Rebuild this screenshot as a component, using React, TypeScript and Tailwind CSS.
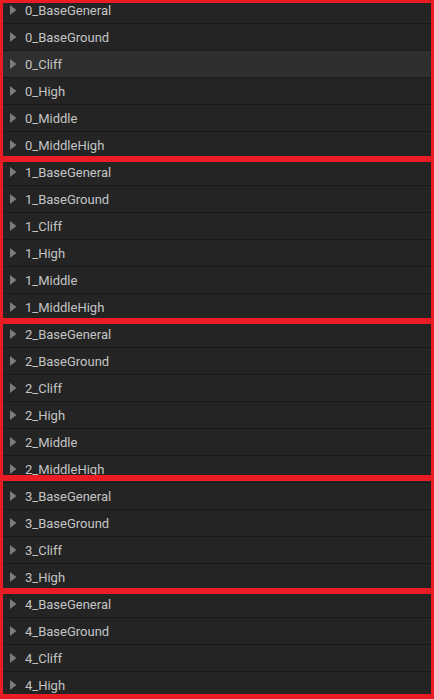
const groups = [
  {
    rows: ['0_BaseGeneral', '0_BaseGround', '0_Cliff', '0_High', '0_Middle', '0_MiddleHigh'],
    frame: 'top-[3px] bottom-0 border-[3px]',
  },
  {
    rows: ['1_BaseGeneral', '1_BaseGround', '1_Cliff', '1_High', '1_Middle', '1_MiddleHigh'],
    frame: 'top-0 bottom-0 border-[3px]',
  },
  {
    rows: ['2_BaseGeneral', '2_BaseGround', '2_Cliff', '2_High', '2_Middle', '2_MiddleHigh'],
    frame: 'top-0 bottom-[5px] border-[3px]',
  },
  {
    rows: ['3_BaseGeneral', '3_BaseGround', '3_Cliff', '3_High'],
    frame: '-top-[5px] bottom-0 border-[3px]',
  },
  {
    rows: ['4_BaseGeneral', '4_BaseGround', '4_Cliff', '4_High'],
    frame: 'top-0 bottom-0 border-[3px] border-b-[5px]',
  },
];

function Row({ label, active }: { label: string; active?: boolean }) {
  return (
    <div
      className={`flex items-center h-[27px] border-b border-[#191919] ${
        active ? 'bg-[#2f2f2f]' : 'bg-[#242424]'
      }`}
    >
      <svg width="7" height="10" viewBox="0 0 7 10" className="ml-[10px] mr-[8px] shrink-0">
        <path d="M0 0 L6.5 5 L0 10 Z" fill="#7c7c7c" />
      </svg>
      <span className="text-[13px] text-[#c4c4c4] leading-none">{label}</span>
    </div>
  );
}

export default function App() {
  return (
    <div
      className="w-[434px] h-[699px] overflow-hidden bg-[#242424]"
      style={{ fontFamily: 'Roboto, "Noto Sans", sans-serif' }}
    >
      <div className="-mt-[3px] flex flex-col">
        {groups.map((g, gi) => (
          <div key={gi} className="relative">
            {g.rows.map((label) => (
              <Row key={label} label={label} active={label === '0_Cliff'} />
            ))}
            {/* red annotation frame drawn over the group */}
            <div className={`absolute inset-x-0 border-[#ec1c24] pointer-events-none ${g.frame}`} />
          </div>
        ))}
      </div>
    </div>
  );
}
